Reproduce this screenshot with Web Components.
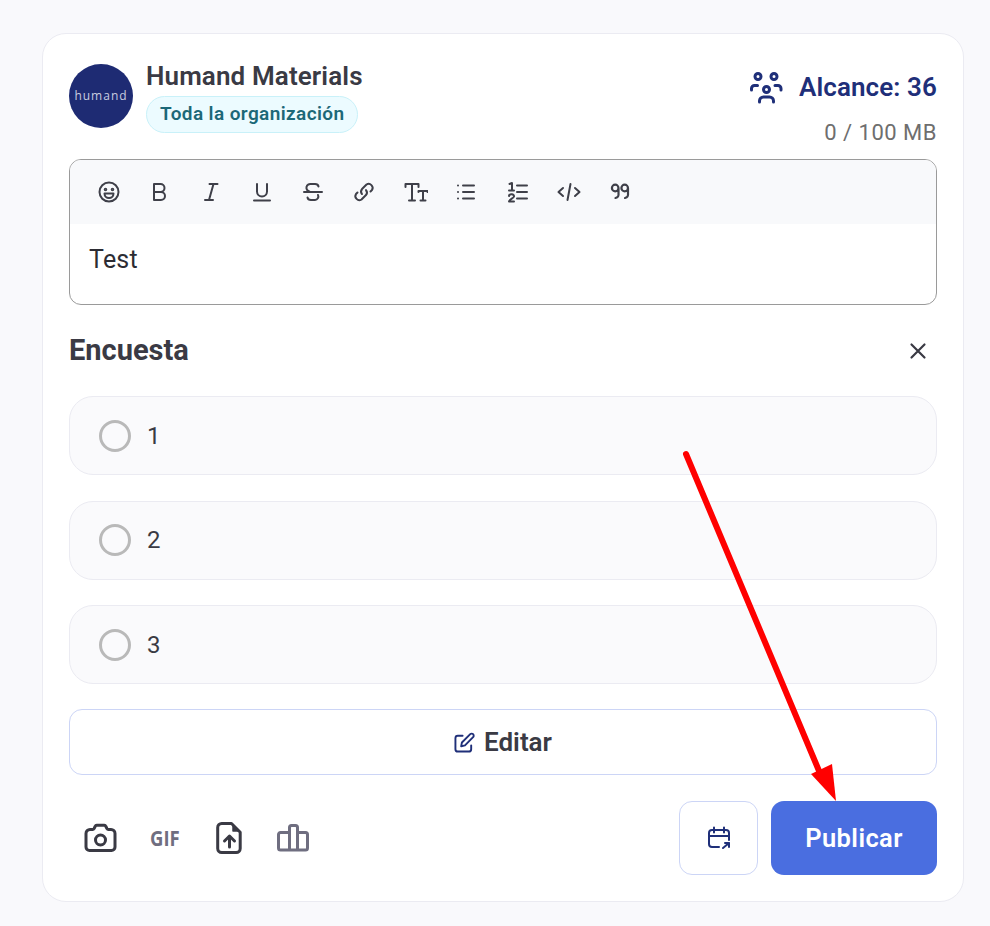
<!DOCTYPE html>
<html lang="es">
<head>
<meta charset="utf-8">
<title>Encuesta</title>
<style>
  html, body { margin: 0; height: 926px; overflow: hidden; }
  body { background: #f9f9fc; font-family: Roboto, "Liberation Sans", sans-serif; color: #3a3a44; }
</style>
</head>
<body>
<post-card>
  <post-header slot="header"></post-header>
  <rich-editor slot="editor">Test</rich-editor>
  <poll-box slot="poll">
    <poll-option>1</poll-option>
    <poll-option>2</poll-option>
    <poll-option>3</poll-option>
  </poll-box>
  <post-footer slot="footer"></post-footer>
</post-card>
<red-arrow></red-arrow>

<script>
// small helper, every element just sets its shadow html once
class Base extends HTMLElement {
  constructor() {
    super();
    this.attachShadow({ mode: "open" });
    this.shadowRoot.innerHTML = this.constructor.html;
  }
}

const ic = 'fill="none" stroke="currentColor" stroke-linecap="round" stroke-linejoin="round"';

customElements.define("post-card", class extends Base {
  static html = `
  <style>
    :host { display: block; box-sizing: border-box; width: 922px; height: 869px; margin: 33px 0 0 42px;
      padding: 30px 26px 0; background: #fff; border: 1px solid #ebebf2; border-radius: 24px; }
  </style>
  <slot name="header"></slot><slot name="editor"></slot><slot name="poll"></slot><slot name="footer"></slot>`;
});

customElements.define("post-header", class extends Base {
  static html = `
  <style>
    :host { display: flex; justify-content: space-between; height: 95px; }
    .who { display: flex; gap: 13px; }
    .avatar { width: 64px; height: 64px; border-radius: 50%; background: #1e2b73; color: #c9cde0;
      display: flex; align-items: center; justify-content: center; font: 400 12px/1 "Open Sans", sans-serif; letter-spacing: 1px; }
    .name { font-size: 26px; font-weight: 600; line-height: 24px; height: 32px; letter-spacing: .12px; }
    .tag { display: inline-block; box-sizing: border-box; height: 37px; padding: 0 13px; line-height: 33px;
      background: #ecfbff; border: 1px solid #c9f1f9; border-radius: 19px; color: #1c6878; font-size: 19px; font-weight: 600; letter-spacing: .4px; }
    .reach { display: flex; flex-direction: column; align-items: flex-end; }
    .alc { display: flex; align-items: center; gap: 16px; height: 46px; color: #1f2f79; font-size: 26px; font-weight: 600; letter-spacing: .1px; }
    .alc svg { width: 34px; height: 34px; }
    .mb { margin-top: 11px; font-size: 22px; line-height: 24px; color: #6e6e6e; letter-spacing: .5px; }
  </style>
  <div class="who">
    <div class="avatar">humand</div>
    <div><div class="name">Humand Materials</div><span class="tag">Toda la organización</span></div>
  </div>
  <div class="reach">
    <div class="alc"><svg viewBox="0 0 34 34" ${ic} stroke-width="3">
      <circle cx="9" cy="6.500" r="3"/><circle cx="25" cy="6.500" r="3"/><circle cx="17.500" cy="19.500" r="3"/>
      <path d="M2.500 20v-1.500a3 3 0 0 1 3-3h3M32 20v-1.500a3 3 0 0 0-3-3h-3M10.500 32v-1a4 4 0 0 1 4-4h6a4 4 0 0 1 4 4v1"/>
    </svg>Alcance: 36</div>
    <div class="mb">0 / 100 MB</div>
  </div>`;
});

customElements.define("rich-editor", class extends Base {
  static html = `
  <style>
    :host { display: block; box-sizing: border-box; height: 146px; border: 1px solid #9a9a9a; border-radius: 12px; overflow: hidden; }
    .bar { display: flex; align-items: center; height: 64px; padding-left: 27px; background: #f8f9fb; color: #3f4049; }
    svg { flex: none; width: 24px; height: 24px; margin-right: 27.100px; }
    .text { padding: 21px 19px; font-size: 25px; line-height: 30px; color: #2c2c33; letter-spacing: .2px; }
  </style>
  <div class="bar">
    <svg viewBox="0 0 24 24" ${ic} stroke-width="2"><circle cx="12" cy="12" r="9.500"/><circle cx="8.500" cy="9.500" r=".8"/><circle cx="15.500" cy="9.500" r=".8"/><path d="M7.500 13.500h9a4.500 4.500 0 0 1-9 0z"/></svg>
    <svg viewBox="0 0 24 24" ${ic} stroke-width="2"><path d="M6 4v16M6 4h6.500a3.700 3.700 0 0 1 0 8H6M6 12h7a4 4 0 0 1 0 8H6"/></svg>
    <svg viewBox="0 0 24 24" ${ic} stroke-width="2"><path d="M10.500 4h8M6 20h8M14.500 4L10 20"/></svg>
    <svg viewBox="0 0 24 24" ${ic} stroke-width="2"><path d="M7 4v7.500a5 5 0 0 0 10 0V4M4 20.500h16"/></svg>
    <svg viewBox="0 0 24 24" ${ic} stroke-width="2"><path d="M17.500 6.500a3.500 3 0 0 0-3.500-2.500h-4a3.800 3.800 0 0 0-1.500 7.500M3 12h18M17 15a3.500 3.500 0 0 1-3 5h-4a3.500 3 0 0 1-3.500-2.500"/></svg>
    <svg viewBox="0 0 24 24" ${ic} stroke-width="2"><path d="M14 10a4 4 0 0 1 0 5l-4.500 4.500a4 4 0 0 1-5.500-5.500l1.500-1.500M10 14a4 4 0 0 1 0-5l4.500-4.500a4 4 0 0 1 5.500 5.500l-1.500 1.500"/></svg>
    <svg viewBox="0 0 24 24" ${ic} stroke-width="2" stroke-linecap="butt" stroke-linejoin="miter"><path d="M1.500 7V4h13v3M8 4v16M5 20.500h6M14.500 12v-1h9v1M19 11v9.500M16.500 20.500h5"/></svg>
    <svg viewBox="0 0 24 24" ${ic} stroke-width="2"><path d="M8 5.500h11M8 12h11M8 18.500h11M3 5.500h.01M3 12h.01M3 18.500h.01"/></svg>
    <svg viewBox="0 0 24 24" ${ic} stroke-width="2"><path d="M11 5.500h10M11 12h10M11 18.500h10M3.500 4L6 3v7M3 10.500h5M3 16a2.500 2 0 0 1 5 .5c0 1.500-5 3-5 5h5"/></svg>
    <svg viewBox="0 0 24 24" ${ic} stroke-width="2"><path d="M6 8l-4.500 4L6 16M18 8l4.500 4-4.500 4M13.500 4l-3 16"/></svg>
    <svg viewBox="0 0 24 24" ${ic} stroke-width="2.200"><path d="M10.500 8a3.300 3.300 0 1 1-6.600 0 3.300 3.300 0 0 1 6.600 0v5.500a4 4 0 0 1-3 4.500M20 8a3.300 3.300 0 1 1-6.600 0 3.300 3.300 0 0 1 6.600 0v5.500a4 4 0 0 1-3 4.500"/></svg>
  </div>
  <div class="text"><slot></slot></div>`;
});

customElements.define("poll-box", class extends Base {
  static html = `
  <style>
    :host { display: block; }
    .head { display: flex; justify-content: space-between; align-items: center; height: 91px; }
    h2 { margin: -2px 0 0; font-size: 29px; font-weight: 700; }
    svg { width: 24px; height: 24px; margin-right: 7px; color: #3a3a44; }
    .list { display: flex; flex-direction: column; gap: 25.500px; }
    .edit { display: flex; align-items: center; justify-content: center; gap: 9px; box-sizing: border-box; height: 66px; margin-top: 25px;
      border: 1px solid #ccd5f6; border-radius: 13px; font-size: 26px; font-weight: 600; }
    .edit svg { width: 21px; height: 21px; margin: 0; color: #1f2f79; }
  </style>
  <div class="head"><h2>Encuesta</h2>
    <svg viewBox="0 0 24 24" ${ic} stroke-width="2.200"><path d="M5.500 5.500l13 13M18.500 5.500l-13 13"/></svg></div>
  <div class="list"><slot></slot></div>
  <div class="edit"><svg viewBox="0 0 22 22" ${ic} stroke-width="2"><path d="M9 4H4a2.500 2.500 0 0 0-2.500 2.500V18A2.500 2.500 0 0 0 4 20.500h11.500A2.500 2.500 0 0 0 18 18v-4"/><path d="M7.500 15l.8-4L17 2.300a2 2 0 0 1 3 3L11.500 14z"/></svg>Editar</div>`;
});

customElements.define("poll-option", class extends Base {
  static html = `
  <style>
    :host { display: flex; align-items: center; gap: 16px; box-sizing: border-box; height: 79px; padding-left: 29px;
      background: #fafafc; border: 1px solid #ebebf2; border-radius: 24px; font-size: 24px; color: #3a3a44; }
    i { box-sizing: border-box; width: 32px; height: 32px; border: 3px solid #b9b9b9; border-radius: 50%; }
  </style>
  <i></i><span><slot></slot></span>`;
});

customElements.define("post-footer", class extends Base {
  static html = `
  <style>
    :host { display: flex; align-items: center; gap: 13px; height: 74px; margin-top: 26px; }
    .tools { display: grid; grid-template-columns: repeat(4, 64px); flex: 1; align-items: center; justify-items: center; color: #3a3a44; }
    .tools svg { width: 36px; height: 36px; display: block; }
    .gif { font: 700 21px/1 "Open Sans", sans-serif; color: #6f6e80; transform: scaleX(.88); }
    .chart { color: #6f6e80; }
    .cal { display: flex; align-items: center; justify-content: center; box-sizing: border-box; width: 79px; height: 74px;
      border: 1px solid #ccd5f6; border-radius: 13px; color: #1f2f79; }
    .cal svg { width: 24px; height: 24px; }
    .pub { display: flex; align-items: center; justify-content: center; width: 166px; height: 74px; border-radius: 13px;
      background: #4a6ee0; color: #fff; font-size: 25.500px; font-weight: 600; letter-spacing: .4px; }
  </style>
  <div class="tools">
    <svg viewBox="0 0 36 36" ${ic} stroke-width="3"><path d="M7 9.500h2.500a2 2 0 0 0 1.600-1l1-2a2 2 0 0 1 1.700-1.200h7.400a2 2 0 0 1 1.700 1.200l1 2a2 2 0 0 0 1.600 1H28a4 4 0 0 1 4 4V27a3.500 3.500 0 0 1-3.500 3.500h-22A3.500 3.500 0 0 1 3 27V13.500a4 4 0 0 1 4-4z"/><circle cx="17.500" cy="20" r="5"/></svg>
    <span class="gif">GIF</span>
    <svg viewBox="0 0 36 36" ${ic} stroke-width="3"><path d="M10.700 3.500h9.800l8.700 8.700v16.300a4 4 0 0 1-4 4H10.700a4 4 0 0 1-4-4v-21a4 4 0 0 1 4-4z"/><path d="M22 5l6 6h-6z" fill="currentColor" stroke-width="1.500"/><path d="M18.500 27V16M13.500 21l5-5 5 5"/></svg>
    <svg class="chart" viewBox="0 0 36 36" ${ic} stroke-width="3"><path d="M5.500 12.500h9V30h-9a2 2 0 0 1-2-2V14.500a2 2 0 0 1 2-2zM16.500 5.500h4a2 2 0 0 1 2 2V30h-8V7.500a2 2 0 0 1 2-2zM22.500 12.500h8a2 2 0 0 1 2 2V28a2 2 0 0 1-2 2h-8"/></svg>
  </div>
  <div class="cal"><svg viewBox="0 0 24 24" ${ic} stroke-width="2"><path d="M12 21H5a3 3 0 0 1-3-3V7a3 3 0 0 1 3-3h14a3 3 0 0 1 3 3v7M2 10h20M7 1.500v5M17 1.500v5M16 22l6-5M18 17h4v4"/></svg></div>
  <div class="pub">Publicar</div>`;
});

// annotation drawn over the screenshot, this one is free placed
customElements.define("red-arrow", class extends Base {
  static html = `
  <style>:host { position: absolute; left: 0; top: 0; width: 990px; height: 926px; pointer-events: none; }
    svg { display: block; }</style>
  <svg width="990" height="926" viewBox="0 0 990 926">
    <path d="M686 454L822 778" stroke="#ff0000" stroke-width="6" stroke-linecap="round" fill="none"/>
    <path d="M836 801L811 774 832 764z" fill="#ff0000"/>
  </svg>`;
});
</script>
</body>
</html>
